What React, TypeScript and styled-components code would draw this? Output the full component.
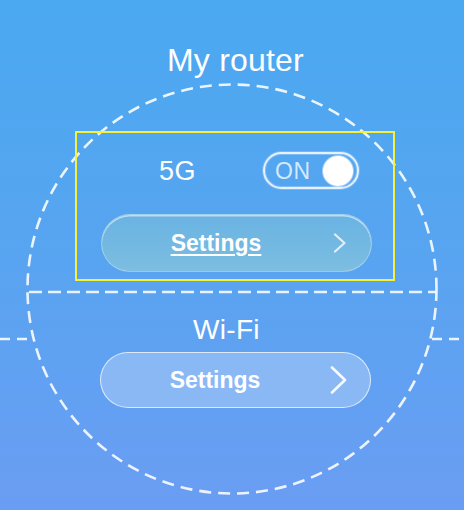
import React from "react";
import styled, { createGlobalStyle } from "styled-components";

const GlobalStyle = createGlobalStyle`
  html, body { margin: 0; padding: 0; }
  body { font-family: "Liberation Sans", Arial, Helvetica, sans-serif; }
  * { box-sizing: border-box; }
`;

const Page = styled.div`
  position: relative;
  width: 464px;
  height: 510px;
  overflow: hidden;
  background: linear-gradient(180deg, #4aa9f0 0%, #58a4f1 50%, #6a9df3 100%);
  color: #fff;
  font-family: "Liberation Sans", Arial, Helvetica, sans-serif;
`;

const Decor = styled.svg`
  position: absolute;
  inset: 0;
  z-index: 0;
  pointer-events: none;
`;

const Content = styled.div`
  position: relative;
  z-index: 1;
  display: flex;
  flex-direction: column;
  align-items: center;
  padding-top: 41px;
`;

const Title = styled.h1`
  margin: 0 0 0 7px;
  font-size: 32px;
  line-height: 38px;
  font-weight: 400;
  letter-spacing: 0.2px;
`;

const HighlightBox = styled.section`
  width: 320px;
  height: 150px;
  margin: 52px 0 0 6px;
  padding: 19px 21px 7px 24px;
  border: 2px solid #f7f03a;
  display: flex;
  flex-direction: column;
`;

const BandRow = styled.div`
  height: 37px;
  display: flex;
  align-items: center;
  justify-content: space-between;
  padding: 0 13px 0 58px;
`;

const BandLabel = styled.span`
  font-size: 27px;
  line-height: 30px;
  letter-spacing: 0.5px;
`;

const Toggle = styled.div`
  width: 96px;
  height: 37px;
  border: 2px solid rgba(255, 255, 255, 0.85);
  border-radius: 19px;
  box-shadow: inset 0 0 0 1px rgba(255, 255, 255, 0.25), 0 0 0 1px rgba(255, 255, 255, 0.2);
  display: flex;
  align-items: center;
  justify-content: space-between;
  padding: 0 4px 0 10px;
`;

const ToggleText = styled.span`
  font-size: 23px;
  line-height: 24px;
  letter-spacing: 0.5px;
  color: rgba(232, 243, 255, 0.88);
`;

const Knob = styled.span`
  width: 30px;
  height: 30px;
  border-radius: 50%;
  background: #fff;
  box-shadow: 0 0 0 1px rgba(255, 255, 255, 0.45);
`;

const SettingsButton = styled.button<{ $focused?: boolean }>`
  width: 271px;
  height: ${(p) => (p.$focused ? "58px" : "56px")};
  margin: ${(p) => (p.$focused ? "25px 0 0 0" : "6px 0 0 7px")};
  border-radius: 30px;
  display: flex;
  align-items: center;
  padding: 0 21px 0 0;
  cursor: pointer;
  font-family: "Liberation Sans", Arial, Helvetica, sans-serif;
  color: #fff;
  border: ${(p) =>
    p.$focused ? "1px solid rgba(255,255,255,0.3)" : "1.5px solid rgba(255,255,255,0.7)"};
  background: ${(p) =>
    p.$focused
      ? "linear-gradient(180deg, #6ab3e3 0%, #72b8e2 50%, #7dbee0 100%)"
      : "rgba(255, 255, 255, 0.26)"};
  box-shadow: ${(p) =>
    p.$focused ? "inset 0 1.5px 0 rgba(255,255,255,0.55)" : "none"};
`;

const ButtonLabel = styled.span<{ $underline?: boolean }>`
  flex: 1;
  text-align: center;
  font-size: 23px;
  line-height: 26px;
  font-weight: 700;
  text-decoration: ${(p) => (p.$underline ? "underline" : "none")};
  text-decoration-thickness: 2px;
  text-underline-offset: 3px;
`;

const ChevronBox = styled.span`
  width: 20px;
  display: flex;
  align-items: center;
  justify-content: center;
`;

const SectionLabel = styled.h2`
  margin: 33px 11px 0 0;
  font-size: 28px;
  line-height: 32px;
  font-weight: 400;
  letter-spacing: 0.3px;
`;

const Chevron = ({ large }: { large?: boolean }) =>
  large ? (
    <svg width="18" height="28" viewBox="0 0 18 28">
      <polyline
        points="2,1.5 15,14 2,26.5"
        fill="none"
        stroke="rgba(255,255,255,0.92)"
        strokeWidth="2.6"
        strokeLinecap="round"
        strokeLinejoin="round"
      />
    </svg>
  ) : (
    <svg width="14" height="20" viewBox="0 0 14 20">
      <polyline
        points="2,1.5 11.5,10 2,18.5"
        fill="none"
        stroke="rgba(255,255,255,0.78)"
        strokeWidth="2.2"
        strokeLinecap="round"
        strokeLinejoin="round"
      />
    </svg>
  );

export default function App() {
  const stroke = "rgba(255,255,255,0.88)";
  return (
    <>
      <GlobalStyle />
      <Page>
        <Decor width="464" height="510" viewBox="0 0 464 510">
          <circle
            cx="232"
            cy="289"
            r="204.5"
            fill="none"
            stroke={stroke}
            strokeWidth="2.6"
            strokeDasharray="12 7"
          />
          <line x1="29" y1="292" x2="436" y2="292" stroke={stroke} strokeWidth="2.6" strokeDasharray="13 6" />
          <line x1="0" y1="339" x2="33" y2="339" stroke={stroke} strokeWidth="2.6" strokeDasharray="10 7" />
          <line x1="432" y1="339" x2="464" y2="339" stroke={stroke} strokeWidth="2.6" strokeDasharray="10 7" />
        </Decor>
        <Content>
          <Title>My router</Title>
          <HighlightBox>
            <BandRow>
              <BandLabel>5G</BandLabel>
              <Toggle>
                <ToggleText>ON</ToggleText>
                <Knob />
              </Toggle>
            </BandRow>
            <SettingsButton $focused>
              <ButtonLabel $underline>Settings</ButtonLabel>
              <ChevronBox>
                <Chevron />
              </ChevronBox>
            </SettingsButton>
          </HighlightBox>
          <SectionLabel>Wi-Fi</SectionLabel>
          <SettingsButton>
            <ButtonLabel>Settings</ButtonLabel>
            <ChevronBox>
              <Chevron large />
            </ChevronBox>
          </SettingsButton>
        </Content>
      </Page>
    </>
  );
}
